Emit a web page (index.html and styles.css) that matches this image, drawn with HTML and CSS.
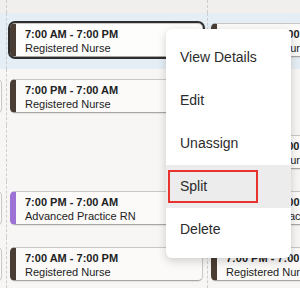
FILE: index.html
```html
<!DOCTYPE html>
<html lang="en">
<head>
    <meta charset="UTF-8">
    <meta name="viewport" content="width=device-width, initial-scale=1.0">
    <title>Schedule</title>
    <link rel="stylesheet" href="styles.css">
</head>
<body>

    <div class="board">
        <div class="grid">
            <div class="row row-off">
                <div class="cell"></div>
                <div class="cell"></div>
                <div class="cell"></div>
            </div>

            <div class="row row-selected">
                <div class="cell"></div>
                <div class="cell">
                    <div class="shift shift-rn is-selected">
                        <div class="shift-time">7:00 AM - 7:00 PM</div>
                        <div class="shift-role">Registered Nurse</div>
                    </div>
                </div>
                <div class="cell">
                    <div class="shift shift-rn">
                        <div class="shift-time">7:00 AM - 7:00 PM</div>
                        <div class="shift-role">Registered Nurse</div>
                    </div>
                </div>
            </div>

            <div class="row">
                <div class="cell">
                    <div class="shift shift-rn">
                        <div class="shift-time">7:00 PM - 7:00 AM</div>
                        <div class="shift-role">Registered Nurse</div>
                    </div>
                </div>
                <div class="cell">
                    <div class="shift shift-rn">
                        <div class="shift-time">7:00 PM - 7:00 AM</div>
                        <div class="shift-role">Registered Nurse</div>
                    </div>
                </div>
                <div class="cell"></div>
            </div>

            <div class="row">
                <div class="cell"></div>
                <div class="cell"></div>
                <div class="cell">
                    <div class="shift shift-rn">
                        <div class="shift-time">7:00 PM - 7:00 AM</div>
                        <div class="shift-role">Registered Nurse</div>
                    </div>
                </div>
            </div>

            <div class="row">
                <div class="cell">
                    <div class="shift shift-aprn">
                        <div class="shift-time">7:00 PM - 7:00 AM</div>
                        <div class="shift-role">Advanced Practice RN</div>
                    </div>
                </div>
                <div class="cell">
                    <div class="shift shift-aprn">
                        <div class="shift-time">7:00 PM - 7:00 AM</div>
                        <div class="shift-role">Advanced Practice RN</div>
                    </div>
                </div>
                <div class="cell">
                    <div class="shift shift-aprn">
                        <div class="shift-time">7:00 AM - 7:00 PM</div>
                        <div class="shift-role">Advanced Practice RN</div>
                    </div>
                </div>
            </div>

            <div class="row">
                <div class="cell">
                    <div class="shift shift-rn">
                        <div class="shift-time">7:00 AM - 7:00 PM</div>
                        <div class="shift-role">Registered Nurse</div>
                    </div>
                </div>
                <div class="cell">
                    <div class="shift shift-rn">
                        <div class="shift-time">7:00 AM - 7:00 PM</div>
                        <div class="shift-role">Registered Nurse</div>
                    </div>
                </div>
                <div class="cell">
                    <div class="shift shift-rn">
                        <div class="shift-time">7:00 PM - 7:00 AM</div>
                        <div class="shift-role">Registered Nurse</div>
                    </div>
                </div>
            </div>
        </div>
    </div>

    <!-- menu kontekstowy zmiany -->
    <ul class="menu">
        <li class="menu-item">View Details</li>
        <li class="menu-item">Edit</li>
        <li class="menu-item">Unassign</li>
        <li class="menu-item is-active">Split<span class="mark"></span></li>
        <li class="menu-item">Delete</li>
    </ul>

</body>
</html>
```

FILE: styles.css
```css
/* Podstawowy styl strony */
body {
    font-family: "Liberation Sans", Arial, sans-serif;
    margin: 0;
    background-color: #f7f6f4;
    color: #222;
    overflow: hidden;
}

/* Siatka grafiku */
.board {
    width: 300px;
    height: 288px;
    overflow: hidden;
}

.grid {
    margin-left: -195px;
    width: 603px;
}

.row {
    display: grid;
    grid-template-columns: 201px 201px 201px;
    height: 56px;
}

.row-off {
    height: 13px;
    background-color: #f0efed;
}

.row-selected {
    background-color: #e5eef4;
}

.cell {
    border-left: 1px dashed #cdcdcd;
    padding: 10px 4px 0 3px;
}

/* Karta zmiany */
.shift {
    height: 34px;
    box-sizing: border-box;
    padding: 3px 0 0 9px;
    background-color: #fbfaf9;
    border: 1px solid #cac8c5;
    border-bottom-color: #a8a6a3;
    border-left: 6px solid #4a3d33;
    border-radius: 5px;
    box-shadow: 0 1px 1px rgba(0, 0, 0, 0.08);
    font-size: 11px;
    line-height: 14px;
    white-space: nowrap;
    overflow: hidden;
}

.shift-rn {
    border-left-color: #4a3d33;
}

.shift-aprn {
    border-left-color: #9d72d6;
}

.shift.is-selected {
    outline: 2px solid #2e2e2e;
    background-color: #fdfdfc;
}

.shift-time {
    font-weight: bold;
}

/* Menu */
.menu {
    position: absolute;
    left: 166px;
    top: 29px;
    width: 125px;
    margin: 0;
    padding: 7px 0;
    list-style: none;
    background-color: white;
    border-radius: 6px;
    box-shadow: 0 3px 10px rgba(0, 0, 0, 0.18);
}

.menu-item {
    position: relative;
    height: 43px;
    line-height: 43px;
    padding-left: 14px;
    font-size: 14px;
    color: #2b2b2b;
}

.menu-item.is-active {
    background-color: #ececec;
}

.mark {
    position: absolute;
    left: 2px;
    top: 5px;
    width: 86px;
    height: 29px;
    border: 2px solid #e8322e;
}
```
